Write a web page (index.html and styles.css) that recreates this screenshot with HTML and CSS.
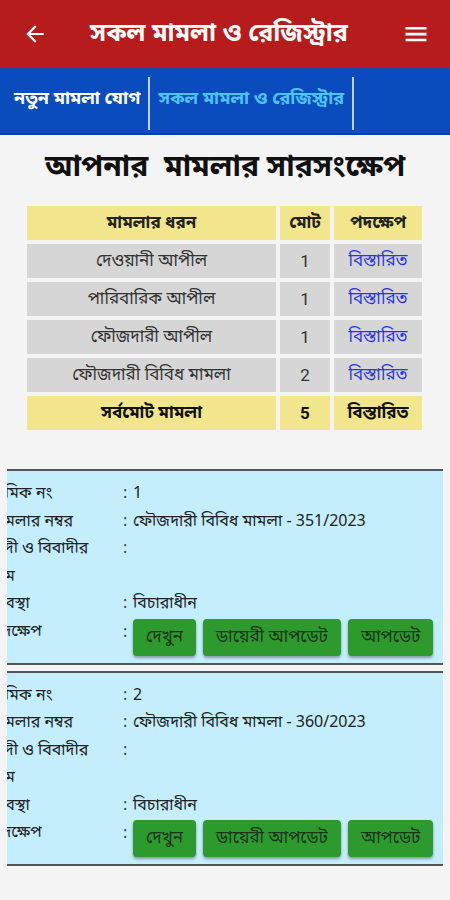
FILE: index.html
```html
<!DOCTYPE html>
<html lang="bn">
<head>
<meta charset="utf-8">
<title>সকল মামলা ও রেজিস্ট্রার</title>
<link rel="stylesheet" href="styles.css">
</head>
<body>
<header class="appbar">
  <svg class="icon back" viewBox="0 0 24 24" width="26" height="26"><path d="M20 11H7.83l5.59-5.59L12 4l-8 8 8 8 1.41-1.41L7.83 13H20v-2z" fill="#fff"/></svg>
  <h1 class="title">সকল মামলা ও রেজিস্ট্রার</h1>
  <svg class="icon menu" viewBox="0 0 24 24" width="28" height="28"><path d="M3 6h18v2.2H3zM3 11h18v2.2H3zM3 16h18v2.2H3z" fill="#fff"/></svg>
</header>
<nav class="tabs">
  <span class="tab active">নতুন মামলা যোগ</span>
  <span class="divider"></span>
  <span class="tab current">সকল মামলা ও রেজিস্ট্রার</span>
  <span class="divider"></span>
</nav>
<main class="content">
  <h2 class="heading">আপনার&nbsp; মামলার সারসংক্ষেপ</h2>
  <div class="summary">
    <div class="cell head">মামলার ধরন</div>
    <div class="cell head">মোট</div>
    <div class="cell head">পদক্ষেপ</div>

    <div class="cell row">দেওয়ানী আপীল</div>
    <div class="cell row num">1</div>
    <div class="cell row link">বিস্তারিত</div>

    <div class="cell row">পারিবারিক আপীল</div>
    <div class="cell row num">1</div>
    <div class="cell row link">বিস্তারিত</div>

    <div class="cell row">ফৌজদারী আপীল</div>
    <div class="cell row num">1</div>
    <div class="cell row link">বিস্তারিত</div>

    <div class="cell row">ফৌজদারী বিবিধ মামলা</div>
    <div class="cell row num">2</div>
    <div class="cell row link">বিস্তারিত</div>

    <div class="cell total">সর্বমোট মামলা</div>
    <div class="cell total num">5</div>
    <div class="cell total">বিস্তারিত</div>
  </div>

  <section class="cards">
    <div class="card">
      <div class="line"><span class="label">ক্রমিক নং</span><span class="colon">:</span><span class="value">1</span></div>
      <div class="line"><span class="label">মামলার নম্বর</span><span class="colon">:</span><span class="value">ফৌজদারী বিবিধ মামলা - 351/2023</span></div>
      <div class="line"><span class="label">বাদী ও বিবাদীর নাম</span><span class="colon">:</span><span class="value"></span></div>
      <div class="line"><span class="label">অবস্থা</span><span class="colon">:</span><span class="value">বিচারাধীন</span></div>
      <div class="line actions"><span class="label">পদক্ষেপ</span><span class="colon">:</span>
        <span class="buttons"><button class="btn">দেখুন</button><button class="btn">ডায়েরী আপডেট</button><button class="btn">আপডেট</button></span>
      </div>
    </div>
    <div class="card">
      <div class="line"><span class="label">ক্রমিক নং</span><span class="colon">:</span><span class="value">2</span></div>
      <div class="line"><span class="label">মামলার নম্বর</span><span class="colon">:</span><span class="value">ফৌজদারী বিবিধ মামলা - 360/2023</span></div>
      <div class="line"><span class="label">বাদী ও বিবাদীর নাম</span><span class="colon">:</span><span class="value"></span></div>
      <div class="line"><span class="label">অবস্থা</span><span class="colon">:</span><span class="value">বিচারাধীন</span></div>
      <div class="line actions"><span class="label">পদক্ষেপ</span><span class="colon">:</span>
        <span class="buttons"><button class="btn">দেখুন</button><button class="btn">ডায়েরী আপডেট</button><button class="btn">আপডেট</button></span>
      </div>
    </div>
  </section>
</main>
</body>
</html>
```
FILE: styles.css
```css
* { box-sizing: border-box; }
html, body { margin: 0; padding: 0; }
body {
  width: 450px;
  min-height: 900px;
  background: #f4f4f4;
  font-family: "Noto Sans Bengali", "Lohit Bengali", "Noto Sans", "Liberation Sans", sans-serif;
  color: #222;
}
.appbar {
  height: 68px;
  background: #b71c1c;
  display: flex;
  align-items: center;
  padding: 0 20px 0 22px;
}
.icon { flex: none; display: block; }
.title {
  flex: 1;
  margin: 0;
  text-align: center;
  color: #fff;
  font-size: 25px;
  font-weight: 700;
  padding-right: 12px;
}
.tabs {
  height: 67px;
  background: #0b4cbd;
  border-bottom: 2px solid #083f9e;
  display: flex;
  align-items: center;
  padding-left: 14px;
}
.tab {
  font-size: 18px;
  font-weight: 700;
  line-height: 1;
  margin-top: -4px;
  white-space: nowrap;
}
.tab.active { color: #fff; }
.tab.current { color: #4fc3f7; }
.divider {
  align-self: stretch;
  width: 2px;
  background: #b9d3f5;
  margin: 9px 8px 3px 8px;
}
.content { padding-top: 12px; }
.heading {
  margin: 0;
  text-align: center;
  font-size: 30px;
  font-weight: 700;
  color: #111;
  line-height: 42px;
}
.summary {
  margin: 17px 28px 0 27px;
  display: grid;
  grid-template-columns: 249px 50px 88px;
  grid-auto-rows: 34px;
  gap: 4px;
}
.cell {
  display: flex;
  align-items: center;
  justify-content: center;
  font-size: 17px;
  color: #333;
}
.cell.num { font-family: Roboto, "Liberation Sans", sans-serif; font-size: 17px; }
.cell.head { background: #f2e68c; font-weight: 700; color: #222; }
.cell.row { background: #d6d6d6; }
.cell.link { color: #2a37e0; }
.cell.total { background: #f2e68c; font-weight: 700; color: #111; }
.cards {
  margin-top: 39px;
  padding: 0 7px;
  display: flex;
  flex-direction: column;
  gap: 6px;
}
.card {
  background: #c4eefc;
  border-top: 2px solid #555;
  border-bottom: 2px solid #555;
  overflow: hidden;
  padding: 10px 0 7px 0;
}
.line {
  display: flex;
  align-items: flex-start;
  font-size: 16px;
  line-height: 27.5px;
  color: #222;
}
.label {
  flex: none;
  width: 132px;
  margin-left: -16px;
  padding-right: 10px;
}
.colon { flex: none; width: 10px; color: #444; }
.value { flex: 1; }
.actions .colon { line-height: 14px; padding-top: 7px; }
.buttons { display: flex; gap: 7px; }
.btn {
  font-family: inherit;
  font-size: 17px;
  background: #2d9a2d;
  color: #1d331d;
  border: none;
  border-radius: 4px;
  height: 37px;
  padding: 0 13px;
  box-shadow: 0 2px 3px rgba(0,0,0,0.35);
}
```
